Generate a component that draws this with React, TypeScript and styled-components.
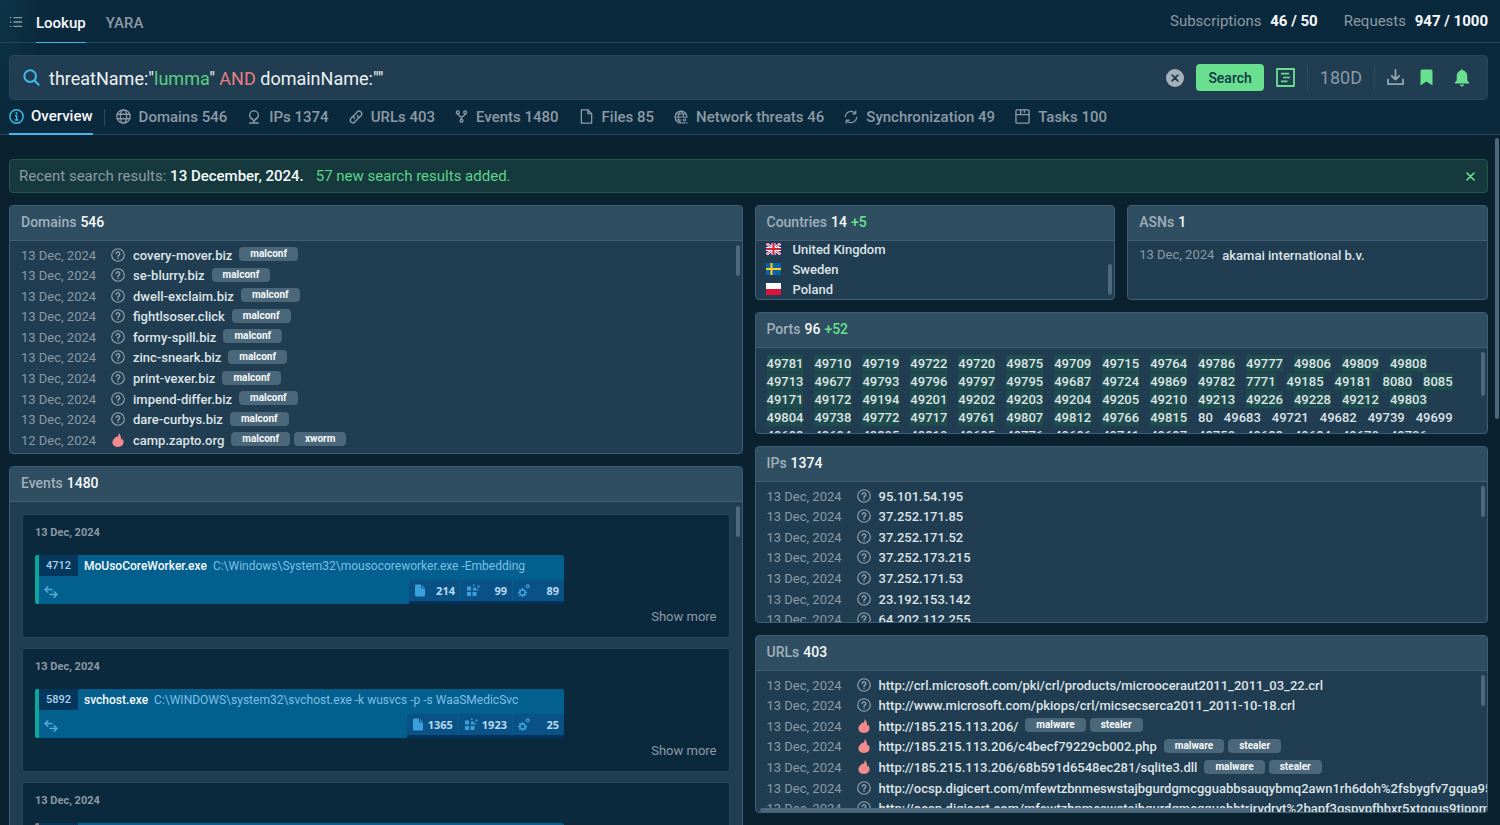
import React, { useState } from 'react';
import styled, { createGlobalStyle, css } from 'styled-components';

const c = {
  top: '#0b293c',
  page: '#0a2130',
  panel: '#203d51',
  head: '#304e62',
  line: '#3f5e72',
  softLine: '#26465a',
  muted: '#8b9aa5',
  text: '#dde3e7',
  white: '#f7fafb',
  green: '#68e08f',
  cyan: '#3fb8e6',
  red: '#f28b8b',
  thumb: '#4c697e',
};

const GlobalStyle = createGlobalStyle`
  *, *::before, *::after { box-sizing: border-box; }
  body {
    margin: 0;
    background: ${c.page};
    color: ${c.text};
    font-family: Roboto, 'Liberation Sans', sans-serif;
    font-size: 13px;
  }
  button, input { font-family: inherit; }
  h2, ul, p { margin: 0; padding: 0; }
  ul { list-style: none; }
  a { color: inherit; text-decoration: none; }
`;

/* ---------- icons ---------- */

const Svg = styled.svg.attrs({ 'aria-hidden': true })`
  display: block;
  flex: none;
  fill: none;
  stroke: currentColor;
  stroke-width: 1.4;
  stroke-linecap: round;
  stroke-linejoin: round;
`;

const Ic = ({ s = 15, box = 16, children }: { s?: number; box?: number; children: React.ReactNode }) => (
  <Svg width={s} height={s} viewBox={`0 0 ${box} ${box}`}>{children}</Svg>
);

const ListIcon = () => (
  <Ic s={14}>
    <path d="M5 3h10M5 8h10M5 13h10" strokeWidth="1.7" strokeLinecap="butt" />
    <path d="M1 3h1.6M1 8h1.6M1 13h1.6" strokeWidth="1.7" strokeLinecap="butt" />
  </Ic>
);
const SearchIcon = () => (
  <Ic s={17} box={18}>
    <circle cx="7.6" cy="7.6" r="6.2" strokeWidth="2.2" />
    <path d="M12.2 12.2l4.4 4.4" strokeWidth="2.2" />
  </Ic>
);
const InfoIcon = () => (
  <Ic>
    <circle cx="8" cy="8" r="7.1" strokeWidth="1.6" />
    <circle cx="8" cy="4.6" r="1.2" fill="currentColor" stroke="none" />
    <path d="M6.4 7.3H8.2v4M6 11.6h4" strokeWidth="1.6" strokeLinecap="butt" />
  </Ic>
);
const GlobeIcon = () => (
  <Ic>
    <circle cx="8" cy="8" r="7.1" />
    <ellipse cx="8" cy="8" rx="3.3" ry="7.1" />
    <path d="M1.2 5.6h13.6M1.2 10.4h13.6" />
  </Ic>
);
const PinIcon = () => (
  <Ic s={14}>
    <path d="M6.4 10.6C4.3 9.8 3 8 3 6a5 5 0 0 1 10 0c0 2-1.3 3.8-3.4 4.6" strokeWidth="1.6" />
    <path d="M6.4 10.6L8 13l1.6-2.4M3 14.8h10M8 12.8v2" strokeWidth="1.6" />
  </Ic>
);
const LinkIcon = () => (
  <Ic s={14}>
    <path d="M6.4 9.600a3 3 0 0 1 0-4.200l3-3.100a2.950 2.950 0 0 1 4.300 4.200l-2.200 2.300" strokeWidth="1.600" />
    <path d="M9.600 6.400a3 3 0 0 1 0 4.200l-3 3.100a2.950 2.950 0 0 1-4.300-4.200l2.200-2.300" strokeWidth="1.600" />
  </Ic>
);
const ForkIcon = () => (
  <Ic s={13}>
    <circle cx="3.500" cy="2.900" r="1.800" strokeWidth="1.700" />
    <circle cx="12.500" cy="2.900" r="1.800" strokeWidth="1.700" />
    <circle cx="8" cy="13.300" r="1.800" strokeWidth="1.700" />
    <path d="M3.500 4.700c0 3 4.500 2.600 4.500 5.200v1.600M12.500 4.700c0 3-4.500 2.600-4.500 5.200" strokeWidth="1.700" />
  </Ic>
);
const FileIcon = () => (
  <Ic s={15}>
    <path d="M2.500 1h7l4 4v10h-11z" />
    <path d="M9.500 1v4h4" />
  </Ic>
);
const NetIcon = () => (
  <Ic s={14}>
    <path d="M8 14.800a6.800 6.800 0 1 1 6.800-6.800" />
    <path d="M8 14.800C5.600 13 5 10.600 5 8s.6-5 3-6.800C10.400 3 11 5.400 11 8M1.200 8h13.600M2.200 4.600h11.600M2.200 11.400h6" strokeWidth="1.200" />
    <circle cx="12" cy="11.200" r="1.300" strokeWidth="1.200" />
    <path d="M9.800 14.800h2.600M14.400 14.800h.4" />
  </Ic>
);
const SyncIcon = () => (
  <Ic s={14}>
    <path d="M1.600 7.600A6.400 6.400 0 0 1 12.600 3.600M14.400 8.400A6.400 6.400 0 0 1 3.400 12.400" />
    <path d="M13.400 1v3.400H10M2.600 15v-3.400H6" />
  </Ic>
);
const TaskIcon = () => (
  <Ic s={15}>
    <rect x="1" y="1" width="14" height="14" rx="1" />
    <path d="M1 6h14M6 1v5M10 1v2.500" />
  </Ic>
);
const ClearIcon = () => (
  <Ic s={18} box={18}>
    <circle cx="9" cy="9" r="9" fill="#a5b1ba" stroke="none" />
    <path d="M6.200 6.200l5.600 5.600M11.800 6.200l-5.600 5.600" stroke="#203d51" strokeWidth="1.800" />
  </Ic>
);
const QueryIcon = () => (
  <Ic s={19} box={19}>
    <rect x="1" y="1" width="17" height="17" strokeWidth="1.800" />
    <path d="M5 5.600h8M7 9.500h7M5 13.400h6.500" strokeWidth="1.600" strokeLinecap="butt" />
  </Ic>
);
const DownloadIcon = () => (
  <Ic s={17} box={17}>
    <path d="M8.500 1v9.500M4.800 7l3.700 3.600L12.200 7M1 10.500v4.700h15v-4.700" strokeWidth="1.800" />
  </Ic>
);
const BookmarkIcon = () => (
  <Ic s={17} box={17}>
    <path d="M2.500 2q0-1.500 1.500-1.500h9q1.500 0 1.500 1.500v14.500l-6-4-6 4z" fill="currentColor" stroke="none" />
  </Ic>
);
const BellIcon = () => (
  <Ic s={18} box={18}>
    <path d="M9 .4c.8 0 1.300.5 1.300 1.200 2.600.7 4 2.800 4 5.600v4.200l2 2.400v.8H1.700v-.8l2-2.400V7.200c0-2.800 1.400-4.900 4-5.600C7.700.9 8.200.4 9 .4zM7 15.400h4a2 2 0 0 1-4 0z" fill="currentColor" stroke="none" />
  </Ic>
);
const CloseIcon = () => (
  <Ic s={9} box={9}>
    <path d="M1 1l7 7M8 1L1 8" strokeWidth="1.600" />
  </Ic>
);
const UnknownIcon = () => (
  <Ic s={14}>
    <circle cx="8" cy="8" r="7.200" strokeWidth="1.300" />
    <path d="M5.900 6.400a2.100 2.100 0 1 1 3.200 1.800c-.8.500-1.100.8-1.100 1.500" strokeWidth="1.500" />
    <circle cx="8" cy="11.800" r=".9" fill="currentColor" stroke="none" />
  </Ic>
);
const FlameIcon = () => (
  <Svg width={14} height={14} viewBox="0 0 14 14">
    <path d="M7.600 0c.4 1.800-.4 3-1.500 4.300-.3-.5-.5-.8-1-1.100C4.700 5 1.400 6.300 1.400 9.300 1.400 12.200 3.900 14 7 14s5.600-1.800 5.600-4.900c0-1.700-.8-2.900-1.500-3.700-.2.700-.5 1.100-1 1.400C10.200 4 9.600 1.600 7.600 0z" fill={c.red} stroke="none" />
  </Svg>
);
const ArrowsIcon = () => (
  <Svg width={14} height={12} viewBox="0 0 14 12">
    <path d="M8 3.500H1.200M3.800.8L1 3.500l2.800 2.700M6 8.500h6.800M10.200 5.800L13 8.500l-2.800 2.700" stroke="#5aa9d6" strokeWidth="1.500" />
  </Svg>
);
const StatFile = () => (
  <Svg width={12} height={13} viewBox="0 0 12 13">
    <path d="M1 1.500Q1 .5 2 .5h5.500L11 4v7.500q0 1-1 1H2q-1 0-1-1z" fill="#3aa0dc" stroke="none" />
    <path d="M7.500.5V4H11" stroke="#0a5285" strokeWidth="1" />
  </Svg>
);
const StatModules = () => (
  <Svg width={14} height={13} viewBox="0 0 14 13">
    <path d="M1 2.500h4v4H1zM1 8h4v4H1zM6.500 8h4v4h-4zM7 3.500h3v3H7zM7 .5h1.600v1.600H7zM11.500 1.500h2v2h-2zM10.500 5h1.600v1.600h-1.600z" fill="#3aa0dc" stroke="none" />
  </Svg>
);
const StatGears = () => (
  <Svg width={12} height={13} viewBox="0 0 12 13">
    <circle cx="4.500" cy="8.500" r="2.700" stroke="#3aa0dc" strokeWidth="1.700" />
    <path d="M4.500 4.400v1M4.500 11.600v1M.4 8.500h1M7.600 8.500h1M1.600 5.600l.7.700M6.700 10.700l.7.700M1.600 11.400l.7-.7" stroke="#3aa0dc" strokeWidth="1.300" />
    <circle cx="9.700" cy="2.300" r="1.500" stroke="#3aa0dc" strokeWidth="1.200" />
  </Svg>
);

const Flag = ({ code }: { code: 'gb' | 'se' | 'pl' }) => (
  <Svg width={15} height={12} viewBox="0 0 15 12">
    {code === 'gb' && (
      <>
        <path d="M0 0h15v12H0z" fill="#1c2f78" stroke="none" />
        <g strokeLinecap="butt">
          <path d="M0 0l15 12M15 0L0 12" stroke="#fff" strokeWidth="2.600" />
          <path d="M0 0l15 12M15 0L0 12" stroke="#d4213d" strokeWidth="1" />
          <path d="M7.500 0v12M0 6h15" stroke="#fff" strokeWidth="4" />
          <path d="M7.500 0v12M0 6h15" stroke="#d4213d" strokeWidth="2.200" />
        </g>
      </>
    )}
    {code === 'se' && (
      <>
        <path d="M0 0h15v12H0z" fill="#0b63a5" stroke="none" />
        <path d="M5.500 0v12M0 6h15" stroke="#fecb1f" strokeWidth="2" strokeLinecap="butt" />
      </>
    )}
    {code === 'pl' && (
      <>
        <path d="M0 0h15v6H0z" fill="#fff" stroke="none" />
        <path d="M0 6h15v6H0z" fill="#dc143c" stroke="none" />
      </>
    )}
  </Svg>
);

/* ---------- frame ---------- */

const Page = styled.div`
  position: relative;
  display: flex;
  flex-direction: column;
  height: 100vh;
  overflow: hidden;
`;

const Top = styled.div`
  background: radial-gradient(44px 110px at 0 0, #0d3547, ${c.top});
`;

const Header = styled.header`
  display: flex;
  justify-content: space-between;
  height: 43px;
  padding: 0 12px 0 9px;
  border-bottom: 1px solid ${c.softLine};
`;

const HeaderNav = styled.nav`
  display: flex;
  align-items: stretch;
  gap: 20px;
`;

const MenuButton = styled.button`
  display: flex;
  align-items: center;
  margin-right: -7px;
  padding: 2px 0 0;
  border: 0;
  background: none;
  color: ${c.muted};
`;

const HeaderTab = styled.a<{ $active?: boolean }>`
  display: flex;
  align-items: center;
  height: 43px;
  padding-top: 4px;
  font-size: 15px;
  font-weight: 500;
  color: ${(p) => (p.$active ? c.white : c.muted)};
  border-bottom: 1px solid ${(p) => (p.$active ? c.cyan : 'transparent')};
`;

const Quotas = styled.div`
  display: flex;
  align-items: center;
  gap: 26px;
  font-size: 15px;
  color: ${c.muted};

  b {
    margin-left: 5px;
    font-weight: 700;
    color: ${c.white};
  }
`;

const SearchBar = styled.form`
  display: flex;
  align-items: center;
  height: 45px;
  margin: 12px 12px 0 9px;
  padding: 0 16px 0 13px;
  border: 1px solid ${c.softLine};
  border-radius: 4px;
  background: ${c.panel};
  color: ${c.cyan};
`;

const QueryField = styled.label`
  display: grid;
  flex: 1;
  margin-left: 9px;
  padding-top: 2px;
  font-size: 18px;
  line-height: 24px;
  white-space: pre;

  > * { grid-area: 1 / 1; }
`;

const QueryInput = styled.input`
  width: 100%;
  padding: 0;
  border: 0;
  outline: 0;
  background: none;
  color: transparent;
  caret-color: ${c.white};
  font-size: inherit;
  line-height: inherit;
`;

const QueryText = styled.span<{ $tone?: 'value' | 'operator' }>`
  color: ${(p) => (p.$tone === 'value' ? '#58cf82' : p.$tone === 'operator' ? '#ea7f82' : '#eef2f4')};
`;

const IconButton = styled.button<{ $color?: string }>`
  display: flex;
  padding: 0;
  border: 0;
  background: none;
  color: ${(p) => p.$color ?? c.green};
`;

const Actions = styled.div`
  display: flex;
  align-items: center;
  gap: 12px;
`;

const SearchButton = styled.button`
  height: 27px;
  padding: 0 12px;
  border: 0;
  border-radius: 4px;
  background: ${c.green};
  color: #123448;
  font-size: 14px;
  font-weight: 500;
`;

const Divider = styled.span<{ $h: number }>`
  width: 1px;
  height: ${(p) => p.$h}px;
  background: #2c4b5f;
`;

const PeriodButton = styled.button`
  padding: 0;
  border: 0;
  background: none;
  color: ${c.muted};
  font-size: 18px;
`;

const Saves = styled.div`
  display: flex;
  align-items: center;
  gap: 14px;
  > :last-child { margin-left: 4px; }
`;

const Tabs = styled.nav`
  display: flex;
  align-items: stretch;
  height: 35px;
  gap: 20px;
  padding: 0 9px;
  border-bottom: 1px solid ${c.softLine};
`;

const First = styled.div`
  display: flex;
  align-items: center;
  gap: 11px;
  margin-right: -9px;
`;

const Tab = styled.a<{ $active?: boolean }>`
  display: flex;
  align-items: center;
  gap: 8px;
  height: 35px;
  color: ${c.muted};
  font-size: 15px;
  font-weight: 500;
  white-space: nowrap;
  border-bottom: 2px solid transparent;
  ${(p) =>
    p.$active &&
    css`
      gap: 7px;
      border-color: ${c.cyan};
      color: ${c.white};
      svg { color: ${c.cyan}; }
    `}
`;

/* ---------- panels ---------- */

const Content = styled.main`
  flex: 1;
  min-height: 0;
  padding: 24px 12px 0 9px;
`;

const Notice = styled.div`
  display: flex;
  align-items: center;
  height: 34px;
  padding: 0 12px 0 9px;
  border: 1px solid #1f5a4b;
  border-radius: 4px;
  background: #15393d;
  font-size: 15px;
  line-height: 18px;
  color: ${c.muted};
  white-space: pre;

  strong { font-weight: 500; color: ${c.white}; }
  em { flex: 1; margin-left: 12px; font-style: normal; color: #5fd389; }
`;

const Columns = styled.div`
  display: grid;
  grid-template-columns: minmax(0, 1fr) minmax(0, 1fr);
  align-items: start;
  gap: 12px;
  margin-top: 12px;
`;

const Column = styled.div`
  display: flex;
  flex-direction: column;
  gap: 12px;
`;

const Pair = styled.div`
  display: grid;
  grid-template-columns: minmax(0, 1fr) minmax(0, 1fr);
  gap: 12px;
`;

const PanelBox = styled.section`
  position: relative;
  overflow: hidden;
  border: 1px solid ${c.line};
  border-radius: 4px;
  background: ${c.panel};
`;

const PanelTitle = styled.h2`
  display: flex;
  align-items: center;
  gap: 4px;
  height: 35px;
  padding: 0 11px 2px;
  border-bottom: 1px solid ${c.line};
  background: ${c.head};
  font-size: 14px;
  font-weight: 500;
  color: #9fb0bb;

  b { font-weight: 500; color: ${c.white}; }
  i { font-style: normal; color: ${c.green}; }
`;

const Body = styled.div<{ $h: number; $end?: boolean }>`
  display: flex;
  flex-direction: column;
  justify-content: ${(p) => (p.$end ? 'flex-end' : 'flex-start')};
  height: ${(p) => p.$h}px;
  overflow: hidden;
`;

const Thumb = styled.span<{ $top: number; $h: number }>`
  position: absolute;
  top: ${(p) => p.$top}px;
  right: 2px;
  width: 4px;
  height: ${(p) => p.$h}px;
  border-radius: 2px;
  background: ${c.thumb};
`;

const BottomThumb = styled.span`
  position: absolute;
  left: 4px;
  bottom: 0;
  width: 67%;
  height: 4px;
  border-radius: 2px;
  background: ${c.thumb};
`;

const PageThumb = styled.span`
  position: absolute;
  top: 138px;
  right: 1px;
  width: 4px;
  height: 281px;
  border-radius: 2px;
  background: ${c.thumb};
`;

type PanelProps = {
  title: string;
  count: number;
  added?: number;
  height: number;
  end?: boolean;
  thumb?: [number, number];
  wide?: boolean;
  children: React.ReactNode;
};

const Panel = ({ title, count, added, height, end, thumb, wide, children }: PanelProps) => (
  <PanelBox>
    <PanelTitle>
      {title} <b>{count}</b> {added && <i>+{added}</i>}
    </PanelTitle>
    <Body $h={height} $end={end}>{children}</Body>
    {thumb && <Thumb $top={thumb[0]} $h={thumb[1]} />}
    {wide && <BottomThumb />}
  </PanelBox>
);

const Records = styled.ul<{ $h: number }>`
  display: grid;
  grid-auto-rows: 1fr;
  flex: none;
  height: ${(p) => p.$h}px;
  margin-top: 4px;
  padding: 0 11px;
`;

const Record = styled.li`
  display: flex;
  align-items: center;
  min-height: 0;
  white-space: nowrap;
`;

const DateText = styled.time`
  flex: none;
  width: 90px;
  color: ${c.muted};
`;

const Name = styled.a`
  margin: 0 7px 0 8px;
  font-weight: 500;
`;

const Tag = styled.span`
  height: 14px;
  margin: 0 4px 2px 0;
  padding: 0 11px;
  border-radius: 4px;
  background: #4b677a;
  color: ${c.white};
  font-size: 10px;
  font-weight: 700;
  line-height: 13px;
`;

const Status = styled.span`
  display: flex;
  margin-bottom: 1px;
  color: #94a5b1;
`;

type Row = [name: string, tags?: string[], hot?: boolean, date?: string];

const RecordList = ({ rows, height }: { rows: Row[]; height: number }) => (
  <Records $h={height}>
    {rows.map(([name, tags = [], hot, date = '13 Dec, 2024']) => (
      <Record key={name}>
        <DateText>{date}</DateText>
        <Status>{hot ? <FlameIcon /> : <UnknownIcon />}</Status>
        <Name href="#">{name}</Name>
        {tags.map((t) => <Tag key={t}>{t}</Tag>)}
      </Record>
    ))}
  </Records>
);

const Country = styled.li`
  display: flex;
  align-items: center;
  gap: 12px;
  height: 20px;
  padding: 0 10px;
  font-weight: 500;
`;

const AsnRow = styled.p`
  display: flex;
  gap: 8px;
  padding: 6px 11px;
  line-height: 16px;
  color: ${c.muted};

  a { padding-top: 1px; font-weight: 500; color: ${c.text}; }
`;

const Ports = styled.ul`
  display: flex;
  flex-wrap: wrap;
  gap: 1px 11px;
  padding: 7px 18px 0 11px;
`;

const Port = styled.li<{ $fresh: boolean }>`
  height: 17px;
  background: ${(p) => (p.$fresh ? '#1f4d4e' : 'transparent')};
  font-weight: 500;
  line-height: 17px;
`;

/* ---------- events ---------- */

const Cards = styled.div`
  display: flex;
  flex-direction: column;
  gap: 10px;
  padding: 12px;
`;

const Card = styled.article`
  display: flex;
  flex: none;
  flex-direction: column;
  height: 124px;
  padding: 11px 12px 10px;
  border: 1px solid ${c.softLine};
  border-radius: 3px;
  background: ${c.top};
`;

const CardDate = styled.time`
  color: ${c.muted};
  font-size: 11px;
  font-weight: 700;
  line-height: 14px;
`;

const Process = styled.div<{ $accent: string }>`
  display: flex;
  flex-direction: column;
  justify-content: space-between;
  width: 529px;
  max-width: 100%;
  height: 49px;
  margin-top: 15px;
  border-left: 4px solid ${(p) => p.$accent};
  border-radius: 2px;
  background: #035f8e;
`;

const ProcessLine = styled.div`
  display: flex;
  align-items: center;
  gap: 6px;
  height: 21px;
  white-space: nowrap;
`;

const Pid = styled.span`
  width: 39px;
  height: 21px;
  background: #05365b;
  color: #a9d3ee;
  font-size: 11px;
  font-weight: 500;
  line-height: 21px;
  text-align: center;
`;

const Exe = styled.b`
  font-size: 12px;
  font-weight: 500;
  color: ${c.white};
`;

const Command = styled.span`
  font-size: 12px;
  color: #7dbfe6;
`;

const ProcessFoot = styled.div`
  display: flex;
  align-items: center;
  justify-content: space-between;
  height: 24px;
  padding-left: 5px;
`;

const Stats = styled.div`
  display: flex;
  height: 24px;
  gap: 1px;
  border-bottom: 3px solid #04315a;
`;

const Stat = styled.span`
  display: flex;
  align-items: center;
  justify-content: space-between;
  gap: 4px;
  min-width: 51px;
  padding: 0 5px;
  background: #0a5285;
  color: #b5daf2;
  font-family: 'Noto Sans', sans-serif;
  font-size: 11px;
  font-weight: 700;
`;

const MoreButton = styled.button`
  align-self: flex-end;
  margin-top: 5px;
  padding: 0;
  border: 0;
  background: none;
  color: ${c.muted};
  font-size: 13px;
  line-height: 16px;
`;

/* ---------- data ---------- */

const tabs: [string, () => React.JSX.Element][] = [
  ['Domains 546', GlobeIcon],
  ['IPs 1374', PinIcon],
  ['URLs 403', LinkIcon],
  ['Events 1480', ForkIcon],
  ['Files 85', FileIcon],
  ['Network threats 46', NetIcon],
  ['Synchronization 49', SyncIcon],
  ['Tasks 100', TaskIcon],
];

const mal = ['malconf'];
const domains: Row[] = [
  ['covery-mover.biz', mal],
  ['se-blurry.biz', mal],
  ['dwell-exclaim.biz', mal],
  ['fightlsoser.click', mal],
  ['formy-spill.biz', mal],
  ['zinc-sneark.biz', mal],
  ['print-vexer.biz', mal],
  ['impend-differ.biz', mal],
  ['dare-curbys.biz', mal],
  ['camp.zapto.org', ['malconf', 'xworm'], true, '12 Dec, 2024'],
  ['drive-connect.biz', mal, false, '12 Dec, 2024'],
];

const ips: Row[] = [
  ['95.101.54.195'], ['37.252.171.85'], ['37.252.171.52'], ['37.252.173.215'],
  ['37.252.171.53'], ['23.192.153.142'], ['64.202.112.255'],
];

const steal = ['malware', 'stealer'];
const urls: Row[] = [
  ['http://crl.microsoft.com/pki/crl/products/microoceraut2011_2011_03_22.crl'],
  ['http://www.microsoft.com/pkiops/crl/micsecserca2011_2011-10-18.crl'],
  ['http://185.215.113.206/', steal, true],
  ['http://185.215.113.206/c4becf79229cb002.php', steal, true],
  ['http://185.215.113.206/68b591d6548ec281/sqlite3.dll', steal, true],
  ['http://ocsp.digicert.com/mfewtzbnmeswstajbgurdgmcgguabbsauqybmq2awn1rh6doh%2fsbygfv7gqua95q'],
  ['http://ocsp.digicert.com/mfewtzbnmeswstajbgurdgmcgguabbtrjrydryt%2bapf3gspypfhbxr5xtqqus9tippmhx'],
];

const freshPorts =
  '49781 49710 49719 49722 49720 49875 49709 49715 49764 49786 49777 49806 49809 49808 49713 49677 49793 49796 49797 49795 49687 49724 49869 49782 7771 49185 49181 8080 8085 49171 49172 49194 49201 49202 49203 49204 49205 49210 49213 49226 49228 49212 49803 49804 49738 49772 49717 49761 49807 49812 49766 49815'.split(' ');
const otherPorts =
  '80 49683 49721 49682 49739 49699 49698 49694 49805 49810 49695 49776 49696 49741 49697 49750 49688 49684 49670 49706'.split(' ');

const events = [
  { pid: 4712, exe: 'MoUsoCoreWorker.exe', cmd: 'C:\\Windows\\System32\\mousocoreworker.exe -Embedding', stats: [214, 99, 89], accent: '#0aa79a' },
  { pid: 5892, exe: 'svchost.exe', cmd: 'C:\\WINDOWS\\system32\\svchost.exe -k wusvcs -p -s WaaSMedicSvc', stats: [1365, 1923, 25], accent: '#0aa79a' },
  { pid: 6340, exe: 'svchost.exe', cmd: '', stats: [], accent: '#8b8088' },
];
const statIcons = [StatFile, StatModules, StatGears];

const tokenize = (query: string) =>
  query.split(/(\bAND\b|\bOR\b|\bNOT\b|"[^"]*")/).map((part, i) => {
    if (/^(AND|OR|NOT)$/.test(part)) return <QueryText key={i} $tone="operator">{part}</QueryText>;
    if (/^".+"$/.test(part))
      return (
        <QueryText key={i}>
          "<QueryText $tone="value">{part.slice(1, -1)}</QueryText>"
        </QueryText>
      );
    return <QueryText key={i}>{part}</QueryText>;
  });

export default function App() {
  const [query, setQuery] = useState('threatName:"lumma" AND domainName:""');

  return (
    <Page>
      <GlobalStyle />
      <Top>
        <Header>
          <HeaderNav aria-label="Main">
            <MenuButton type="button" aria-label="Menu"><ListIcon /></MenuButton>
            <HeaderTab href="#" $active>Lookup</HeaderTab>
            <HeaderTab href="#">YARA</HeaderTab>
          </HeaderNav>
          <Quotas>
            <span>Subscriptions <b>46 / 50</b></span>
            <span>Requests <b>947 / 1000</b></span>
          </Quotas>
        </Header>

        <SearchBar role="search" onSubmit={(e) => e.preventDefault()}>
          <SearchIcon />
          <QueryField>
            <span aria-hidden="true">{tokenize(query)}</span>
            <QueryInput aria-label="Search query" spellCheck={false} value={query} onChange={(e) => setQuery(e.target.value)} />
          </QueryField>
          <Actions>
            <IconButton type="button" aria-label="Clear" onClick={() => setQuery('')}><ClearIcon /></IconButton>
            <SearchButton type="submit">Search</SearchButton>
            <IconButton type="button" aria-label="Query builder"><QueryIcon /></IconButton>
            <Divider $h={26} />
            <PeriodButton type="button">180D</PeriodButton>
            <Divider $h={26} />
            <Saves>
              <IconButton type="button" aria-label="Download" $color="#93a5b1"><DownloadIcon /></IconButton>
              <IconButton type="button" aria-label="Bookmark"><BookmarkIcon /></IconButton>
              <IconButton type="button" aria-label="Notifications"><BellIcon /></IconButton>
            </Saves>
          </Actions>
        </SearchBar>

        <Tabs aria-label="Results">
          <First>
            <Tab href="#" $active><InfoIcon />Overview</Tab>
            <Divider $h={17} />
          </First>
          {tabs.map(([label, Icon]) => (
            <Tab href="#" key={label}><Icon />{label}</Tab>
          ))}
        </Tabs>
      </Top>

      <Content>
        <Notice role="status">
          Recent search results: <strong>13 December, 2024.</strong>
          <em>57 new search results added.</em>
          <IconButton type="button" aria-label="Dismiss"><CloseIcon /></IconButton>
        </Notice>

        <Columns>
          <Column>
            <Panel title="Domains" count={546} height={212} thumb={[39, 31]}>
              <RecordList rows={domains} height={226} />
            </Panel>
            <Panel title="Events" count={1480} height={420} thumb={[39, 31]}>
              <Cards>
                {events.map((e) => (
                  <Card key={e.pid}>
                    <CardDate>13 Dec, 2024</CardDate>
                    <Process $accent={e.accent}>
                      <ProcessLine>
                        <Pid>{e.pid}</Pid>
                        <Exe>{e.exe}</Exe>
                        <Command>{e.cmd}</Command>
                      </ProcessLine>
                      <ProcessFoot>
                        <ArrowsIcon />
                        <Stats>
                          {e.stats.map((n, i) => {
                            const Icon = statIcons[i];
                            return <Stat key={i}><Icon />{n}</Stat>;
                          })}
                        </Stats>
                      </ProcessFoot>
                    </Process>
                    <MoreButton type="button">Show more</MoreButton>
                  </Card>
                ))}
              </Cards>
            </Panel>
          </Column>

          <Column>
            <Pair>
              <Panel title="Countries" count={14} added={5} height={58} end thumb={[58, 31]}>
                <ul>
                  <Country><Flag code="gb" />United Kingdom</Country>
                  <Country><Flag code="se" />Sweden</Country>
                  <Country><Flag code="pl" />Poland</Country>
                </ul>
              </Panel>
              <Panel title="ASNs" count={1} height={58}>
                <AsnRow><time>13 Dec, 2024</time><a href="#">akamai international b.v.</a></AsnRow>
              </Panel>
            </Pair>
            <Panel title="Ports" count={96} added={52} height={85} thumb={[39, 44]}>
              <Ports>
                {freshPorts.map((p) => <Port key={p} $fresh>{p}</Port>)}
                {otherPorts.map((p) => <Port key={p} $fresh={false}>{p}</Port>)}
              </Ports>
            </Panel>
            <Panel title="IPs" count={1374} height={140} thumb={[39, 31]}>
              <RecordList rows={ips} height={144} />
            </Panel>
            <Panel title="URLs" count={403} height={141} thumb={[39, 31]} wide>
              <RecordList rows={urls} height={144} />
            </Panel>
          </Column>
        </Columns>
      </Content>
      <PageThumb />
    </Page>
  );
}
